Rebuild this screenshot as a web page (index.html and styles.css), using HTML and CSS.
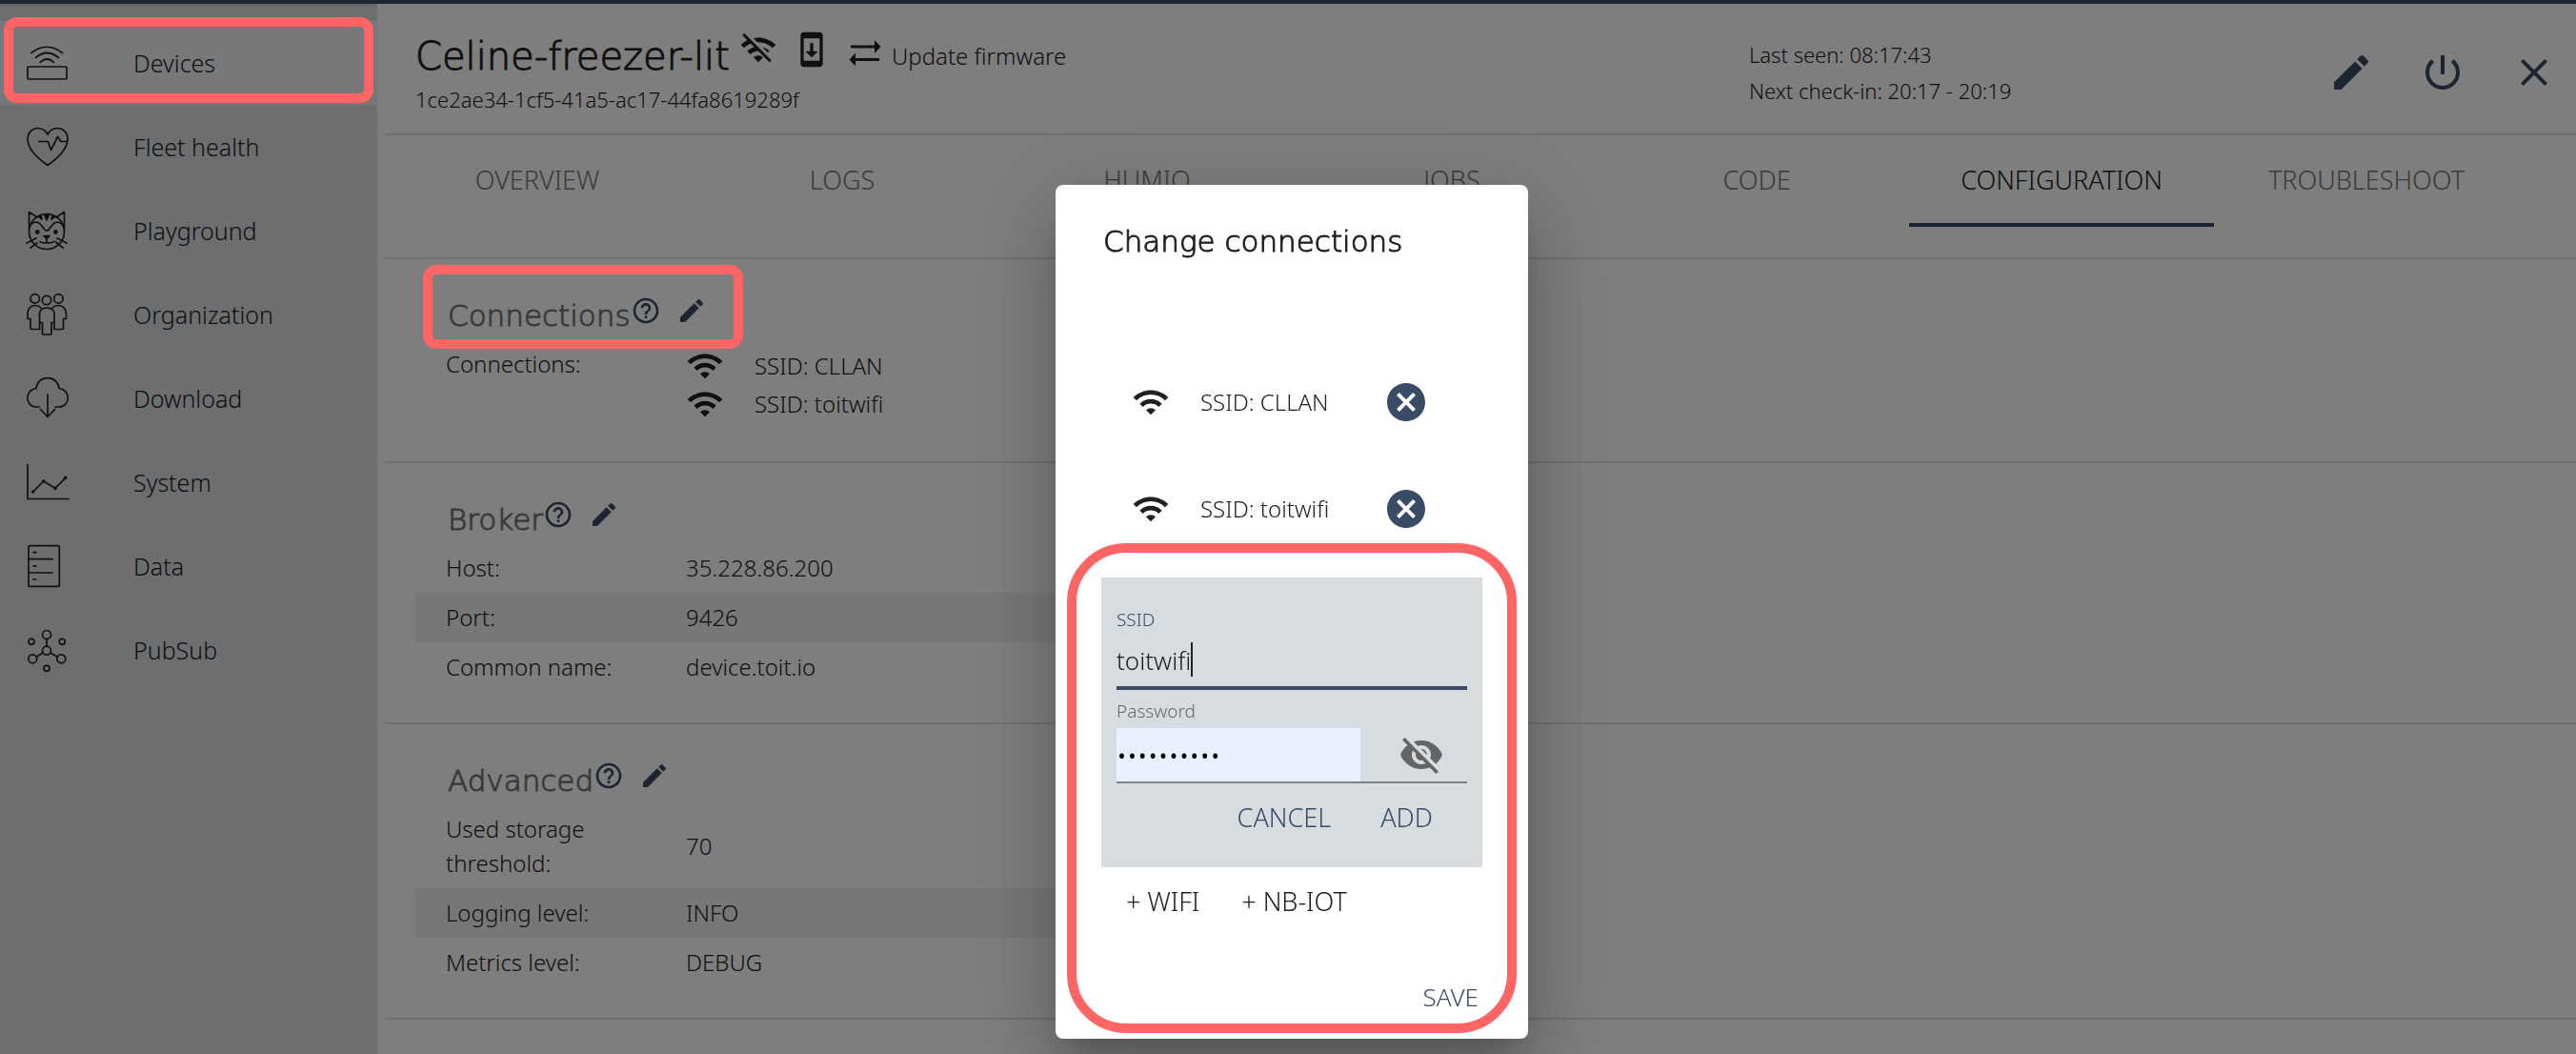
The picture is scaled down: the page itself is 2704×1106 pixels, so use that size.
FILE: index.html
```html
<!DOCTYPE html>
<html lang="en">
<head>
<meta charset="utf-8">
<title>Celine-freezer-lit – Configuration</title>
<link rel="stylesheet" href="styles.css">
</head>
<body>
<svg class="sprite" aria-hidden="true">
  <symbol id="wifi" viewBox="0 0 24 24"><path d="M1 9l2 2c4.97-4.97 13.03-4.97 18 0l2-2C16.93 2.93 7.08 2.93 1 9zm8 8l3 3 3-3c-1.65-1.66-4.34-1.66-6 0zm-4-4l2 2c2.76-2.76 7.24-2.76 10 0l2-2C15.14 9.14 8.87 9.14 5 13z"/></symbol>
  <symbol id="edit" viewBox="0 0 24 24"><path d="M3 17.25V21h3.75L17.81 9.94l-3.75-3.75L3 17.25zM20.71 7.04c.39-.39.39-1.02 0-1.41l-2.34-2.34c-.39-.39-1.02-.39-1.41 0l-1.83 1.83 3.75 3.75 1.83-1.83z"/></symbol>
  <symbol id="help" viewBox="0 0 24 24"><path d="M11 18h2v-2h-2v2zm1-16C6.48 2 2 6.48 2 12s4.48 10 10 10 10-4.48 10-10S17.52 2 12 2zm0 18c-4.41 0-8-3.59-8-8s3.59-8 8-8 8 3.59 8 8-3.59 8-8 8zm0-14c-2.21 0-4 1.79-4 4h2c0-1.1.9-2 2-2s2 .9 2 2c0 2-3 1.75-3 5h2c0-2.25 3-2.5 3-5 0-2.21-1.79-4-4-4z"/></symbol>
  <symbol id="cancel" viewBox="0 0 24 24"><path d="M12 2C6.47 2 2 6.47 2 12s4.47 10 10 10 10-4.47 10-10S17.53 2 12 2zm5 13.59L15.59 17 12 13.41 8.41 17 7 15.59 10.59 12 7 8.41 8.41 7 12 10.59 15.59 7 17 8.41 13.41 12 17 15.59z"/></symbol>
</svg>

<div class="app">
  <div class="topbar"></div>
  <div class="body">
    <nav class="sidebar">
      <a class="nav-item nav-item-active marked" href="#devices">
        <svg class="nav-icon" viewBox="0 0 48 48"><rect x="3" y="28" width="41" height="13" rx="1"/><path d="M7 13.5Q23 1 39.5 13.5M11.5 18.5Q23.3 8.5 35.5 18.5M16 23.5Q23.3 16.5 30.5 23.5"/></svg>
        Devices
      </a>
      <a class="nav-item" href="#health">
        <svg class="nav-icon" viewBox="0 0 48 48"><path d="M24 43.5C12 35 3 25 3 16C3 9 8 4.5 13.5 4.5C18 4.5 22 7 24 11C26 7 30 4.5 34.5 4.5C40 4.5 45 9 45 16C45 25 36 35 24 43.5ZM14.5 18.5H24.5L27.5 27.5L34.5 13.5L38 18.5H44.5"/></svg>
        Fleet health
      </a>
      <a class="nav-item" href="#playground">
        <svg class="nav-icon" viewBox="0 0 48 48"><circle cx="23" cy="25" r="18.5"/><path d="M4.5 22V4.5L13 10M41.5 22V4.5L33 10M5 20C8 14 14 14 17 18L21 23C22.5 24.5 24 24.5 25 23L29 18C32 14 38 14 41 20M23 31V36.5M16 35.5C17 37 19 36.8 23 36.8S29 37 30.5 35.5M2 37L12 32M6 42L13 37M44 37L34 32M40 42L32.5 36"/><path class="solid" d="M20.5 7H25.5L23 13ZM14 9L17 8L18 12ZM32 9L29 8L28 12ZM20 29.5H26L23 32.5Z"/><circle class="solid" cx="13.3" cy="25.5" r="1.6"/><circle class="solid" cx="32.4" cy="25.5" r="1.6"/></svg>
        Playground
      </a>
      <a class="nav-item" href="#organization">
        <svg class="nav-icon" viewBox="0 0 48 48"><circle cx="10.7" cy="7.4" r="4.7"/><circle cx="23" cy="9" r="4.7"/><circle cx="35.4" cy="7.4" r="4.7"/><path d="M17 17C15 15 13 14.5 11 14.5C6 14.5 3 18 3 23V28.5H6V38.5Q6 39.5 7 39.5H15.5V32M29 17C31 15 33 14.5 35 14.5C40 14.5 43.5 18 43.5 23V28.5H40.5V38.5Q40.5 39.5 39.5 39.5H31V32M15.5 32.5V24C15.5 19 18.5 17 23 17S31 19 31 24V32.5H28V44Q28 45 27 45H19.5Q18.5 45 18.5 44V32.5Z"/></svg>
        Organization
      </a>
      <a class="nav-item" href="#download">
        <svg class="nav-icon" viewBox="0 0 48 48"><path d="M15.5 33H12C6.5 33 2.8 28.5 2.8 23.5C2.8 18 7 14 12 13.5C12.5 7 17.5 2.7 24 2.7S35.5 7 36 13.5C41 14 45.3 18 45.3 23.5C45.3 28.5 41.5 33 36 33H32M24 20V43.5M16.5 35.5L24 43.5L31.5 35.5"/></svg>
        Download
      </a>
      <a class="nav-item" href="#system">
        <svg class="nav-icon" viewBox="0 0 48 48"><path d="M3 5.5V41.5H46M8.7 34L19.7 23L32 30.3L42.7 19.3"/><circle class="solid" cx="8.7" cy="34" r="1"/><circle class="solid" cx="19.7" cy="23" r="1"/><circle class="solid" cx="32" cy="30.3" r="1"/><circle class="solid" cx="42.7" cy="19.3" r="1"/></svg>
        System
      </a>
      <a class="nav-item" href="#data">
        <svg class="nav-icon" viewBox="0 0 48 48"><rect x="4" y="2.7" width="32.3" height="42.6" rx="1"/><path d="M4 16.7H29M4 31H29M9 9.7H12M9 24H12M9 38H12"/></svg>
        Data
      </a>
      <a class="nav-item" href="#pubsub">
        <svg class="nav-icon" viewBox="0 0 48 48"><circle cx="23" cy="8" r="4.5"/><circle cx="23" cy="24.7" r="4.5"/><circle cx="8.3" cy="33.3" r="4.5"/><circle cx="38.3" cy="33.3" r="4.5"/><circle cx="7" cy="15.3" r="3"/><circle cx="39.3" cy="15.3" r="3"/><circle cx="23" cy="43.3" r="3"/><path d="M23 12.5V20M19 27L12.5 31M27 27L34 31"/></svg>
        PubSub
      </a>
    </nav>

    <main class="main">
      <header class="device-header">
        <div class="device-name">
          <div class="title-row">
            <h1>Celine-freezer-lit</h1>
            <svg class="icon-40" viewBox="0 0 24 24"><path d="M22.99 9C19.15 5.16 13.8 3.76 8.84 4.78l2.52 2.52c3.47-.17 6.99 1.05 9.63 3.7l2-2zm-4 4c-1.29-1.29-2.84-2.13-4.49-2.56l3.53 3.53.96-.97zM2 3.05L5.07 6.1C3.6 6.82 2.22 7.78 1 9l1.99 2c1.24-1.24 2.67-2.16 4.2-2.77l2.24 2.24C7.81 10.89 6.27 11.73 5 13v.01L6.99 15c1.36-1.36 3.14-2.04 4.92-2.06L18.98 20l1.27-1.26L3.29 1.79 2 3.05zM9 17l3 3 3-3c-1.65-1.66-4.34-1.66-6 0z"/></svg>
            <svg class="icon-40 phone" viewBox="0 0 24 24"><path d="M17 1.01L7 1c-1.1 0-2 .9-2 2v18c0 1.1.9 2 2 2h10c1.1 0 2-.9 2-2V3c0-1.1-.9-1.99-2-1.99zM17 19H7V5h10v14zm-1-6h-3V8h-2v5H8l4 4 4-4z"/></svg>
            <a class="firmware" href="#firmware">
              <svg class="swap" viewBox="0 0 36 28"><path d="M3 5.5H28V0L34.5 7L28 14V8.5H3ZM33 19H8V13.5L1.5 20.5L8 27.5V22H33Z"/></svg>
              Update firmware
            </a>
          </div>
          <div class="uuid">1ce2ae34-1cf5-41a5-ac17-44fa8619289f</div>
        </div>
        <div class="device-times">
          <div>Last seen: 08:17:43</div>
          <div>Next check-in: 20:17 - 20:19</div>
        </div>
        <div class="device-actions">
          <button class="icon-button" aria-label="Edit"><svg class="icon-48"><use href="#edit"/></svg></button>
          <button class="icon-button" aria-label="Reboot"><svg class="icon-48" viewBox="0 0 24 24"><path d="M13 3h-2v10h2V3zm4.83 2.17l-1.42 1.42C17.99 7.86 19 9.81 19 12c0 3.87-3.13 7-7 7s-7-3.13-7-7c0-2.19 1.01-4.14 2.58-5.42L6.17 5.17C4.23 6.82 3 9.26 3 12c0 4.97 4.03 9 9 9s9-4.03 9-9c0-2.74-1.23-5.18-3.17-6.83z"/></svg></button>
          <button class="icon-button" aria-label="Close"><svg class="icon-48" viewBox="0 0 24 24"><path d="M19 6.41L17.59 5 12 10.59 6.41 5 5 6.41 10.59 12 5 17.59 6.41 19 12 13.41 17.59 19 19 17.59 13.41 12z"/></svg></button>
        </div>
      </header>

      <div class="tabs" role="tablist">
        <button class="tab" role="tab">OVERVIEW</button>
        <button class="tab" role="tab">LOGS</button>
        <button class="tab" role="tab">HUMIO</button>
        <button class="tab" role="tab">JOBS</button>
        <button class="tab" role="tab">CODE</button>
        <button class="tab tab-active" role="tab" aria-selected="true">CONFIGURATION</button>
        <button class="tab" role="tab">TROUBLESHOOT</button>
      </div>

      <section class="section">
        <div class="section-head marked">
          <h2>Connections</h2>
          <button class="icon-button" aria-label="About connections"><svg class="icon-32"><use href="#help"/></svg></button>
          <button class="icon-button edit" aria-label="Edit connections"><svg class="icon-32"><use href="#edit"/></svg></button>
        </div>
        <table class="details">
          <tr class="top">
            <th scope="row">Connections:</th>
            <td>
              <ul class="networks">
                <li><svg class="icon-40"><use href="#wifi"/></svg>SSID: CLLAN</li>
                <li><svg class="icon-40"><use href="#wifi"/></svg>SSID: toitwifi</li>
              </ul>
            </td>
          </tr>
        </table>
      </section>

      <section class="section">
        <div class="section-head">
          <h2>Broker</h2>
          <button class="icon-button" aria-label="About the broker"><svg class="icon-32"><use href="#help"/></svg></button>
          <button class="icon-button edit" aria-label="Edit broker"><svg class="icon-32"><use href="#edit"/></svg></button>
        </div>
        <table class="details">
          <tr><th scope="row">Host:</th><td>35.228.86.200</td></tr>
          <tr><th scope="row">Port:</th><td>9426</td></tr>
          <tr><th scope="row">Common name:</th><td>device.toit.io</td></tr>
        </table>
      </section>

      <section class="section">
        <div class="section-head">
          <h2>Advanced</h2>
          <button class="icon-button" aria-label="About advanced settings"><svg class="icon-32"><use href="#help"/></svg></button>
          <button class="icon-button edit" aria-label="Edit advanced settings"><svg class="icon-32"><use href="#edit"/></svg></button>
        </div>
        <table class="details">
          <tr><th scope="row">Used storage threshold:</th><td>70</td></tr>
          <tr><th scope="row">Logging level:</th><td>INFO</td></tr>
          <tr><th scope="row">Metrics level:</th><td>DEBUG</td></tr>
        </table>
      </section>
    </main>
  </div>
</div>

<div class="backdrop">
  <div class="dialog" role="dialog" aria-labelledby="dialog-title">
    <h2 class="dialog-title" id="dialog-title">Change connections</h2>
    <ul class="dialog-list">
      <li>
        <svg class="icon-40"><use href="#wifi"/></svg>
        <span class="ssid">SSID: CLLAN</span>
        <button class="icon-button" aria-label="Remove CLLAN"><svg class="icon-48"><use href="#cancel"/></svg></button>
      </li>
      <li>
        <svg class="icon-40"><use href="#wifi"/></svg>
        <span class="ssid">SSID: toitwifi</span>
        <button class="icon-button" aria-label="Remove toitwifi"><svg class="icon-48"><use href="#cancel"/></svg></button>
      </li>
    </ul>
    <form class="wifi-form">
      <label class="label label-focused" for="ssid">SSID</label>
      <div class="field field-focused">
        <input id="ssid" type="text" value="toitwifi">
        <span class="caret"></span>
      </div>
      <label class="label label-password" for="password">Password</label>
      <div class="field field-password">
        <input id="password" type="password" value="toitpasswd">
        <button class="icon-button reveal" type="button" aria-label="Show password"><svg class="icon-48" viewBox="0 0 24 24"><path d="M12 7c2.76 0 5 2.24 5 5 0 .65-.13 1.26-.36 1.83l2.92 2.92c1.51-1.26 2.7-2.89 3.43-4.75-1.73-4.39-6-7.5-11-7.5-1.4 0-2.74.25-3.98.7l2.16 2.16C10.74 7.13 11.35 7 12 7zM2 4.27l2.28 2.28.46.46C3.08 8.3 1.78 10.02 1 12c1.73 4.39 6 7.5 11 7.5 1.55 0 3.03-.3 4.38-.84l.42.42L19.73 22 21 20.73 3.27 3 2 4.27zM7.53 9.8l1.55 1.55c-.05.21-.08.43-.08.65 0 1.66 1.34 3 3 3 .22 0 .44-.03.65-.08l1.55 1.55c-.67.33-1.41.53-2.2.53-2.76 0-5-2.24-5-5 0-.79.2-1.53.53-2.2zm4.31-.78l3.15 3.15.02-.16c0-1.66-1.34-3-3-3l-.17.01z"/></svg></button>
      </div>
      <div class="form-actions">
        <button class="text-button" type="button">CANCEL</button>
        <button class="text-button" type="button">ADD</button>
      </div>
    </form>
    <div class="add-actions">
      <button class="text-button">+ WIFI</button>
      <button class="text-button">+ NB-IOT</button>
    </div>
    <div class="dialog-actions">
      <button class="text-button">SAVE</button>
    </div>
  </div>
</div>
</body>
</html>
```
FILE: styles.css
```css
:root {
  --navy: #3a4b66;
  --ink: #212121;
  --muted: #757575;
  --line: #dfdfdf;
  --mark: #ff6565;
}

* { box-sizing: border-box; }

body {
  margin: 0;
  background: #fcfcfc;
  color: var(--ink);
  font-family: "Noto Sans", "Open Sans", sans-serif;
  font-size: 24px;
  font-weight: 300;
  line-height: 36px;
}

h1, h2, ul { margin: 0; padding: 0; }
ul { list-style: none; }
h1, h2 {
  font-family: "DejaVu Sans", sans-serif;
  font-weight: 200;
  -webkit-text-stroke: 1px currentColor;
}
a { color: inherit; text-decoration: none; }
button { margin: 0; border: 0; background: none; font: inherit; cursor: pointer; }
svg { display: block; flex: none; fill: currentColor; }

.sprite { position: absolute; width: 0; height: 0; }
.icon-32 { width: 32px; height: 32px; }
.icon-40 { width: 40px; height: 40px; }
.icon-48 { width: 48px; height: 48px; }
.icon-button { padding: 0; color: var(--navy); }

.app { display: flex; flex-direction: column; height: 100vh; overflow: hidden; }
.topbar { flex: none; height: 4px; background: var(--navy); }
.body { display: flex; flex: 1; }

/* Rounded frames that point out a control, drawn above the backdrop */
.marked { position: relative; }
.marked::after, .dialog::after {
  content: "";
  position: absolute;
  z-index: 20;
  border: 10px solid var(--mark);
  border-radius: 14px;
  pointer-events: none;
}

/* Sidebar */
.sidebar {
  flex: none;
  width: 396px;
  padding-top: 16px;
  border-top: 2px solid #c6c8cb;
  background: #dadce0;
}
.nav-item {
  display: flex;
  align-items: center;
  gap: 66px;
  height: 88px;
  padding-left: 26px;
  font-size: 25px;
}
.nav-item-active { background: #eef0f2; }
.nav-item.marked::after { inset: -4px 4px 2px; }
.nav-icon {
  width: 48px;
  height: 48px;
  fill: none;
  stroke: currentColor;
  stroke-width: 1.7;
  stroke-linejoin: round;
  stroke-linecap: round;
}
.nav-icon .solid { fill: currentColor; }

/* Device header */
.main { flex: 1; min-width: 0; padding-left: 8px; }
.device-header {
  display: grid;
  grid-template-columns: 1400px 1fr auto;
  height: 138px;
  padding: 0 20px 0 32px;
  border-bottom: 2px solid var(--line);
}
.title-row { display: flex; height: 72px; padding-top: 28px; }
h1 { width: 340px; font-size: 40px; line-height: 54px; white-space: nowrap; }
.phone { margin-left: 16px; }
.firmware { display: flex; margin-left: 18px; line-height: 54px; }
.swap { width: 36px; height: 28px; margin: 10px 10px 0 0; }
.uuid { padding-top: 10px; font-size: 22px; }
.device-times { padding-top: 34px; font-size: 22px; line-height: 38px; }
.device-actions { display: flex; align-items: flex-start; gap: 48px; padding-top: 48px; }

/* Tabs */
.tabs {
  display: grid;
  grid-template-columns: repeat(7, 1fr);
  height: 130px;
  padding: 0 60px 32px 0;
  border-bottom: 2px solid var(--line);
}
.tab {
  padding: 2px 0 0;
  border-bottom: 4px solid transparent;
  color: var(--muted);
  font-size: 27px;
}
.tab-active { border-color: var(--navy); color: var(--ink); }

/* Sections */
.section { padding: 34px 32px 32px; border-bottom: 2px solid var(--line); }
.section-head {
  display: flex;
  align-items: flex-start;
  width: max-content;
  height: 50px;
  margin-left: 34px;
}
.section-head.marked::after { inset: -28px -38px -10px -26px; }
.section-head h2 { color: var(--muted); font-size: 31px; line-height: 50px; }
.section-head .icon-button { margin-top: 4px; }
.section-head .edit { margin-left: 16px; }

.details { width: 1064px; max-width: 100%; border-collapse: collapse; }
.details tr:nth-child(even) { background: #efefef; }
.details th, .details td { padding: 8px 0; text-align: left; font-weight: 300; }
.details th { width: 284px; padding: 8px 70px 8px 32px; }
.details .top th { vertical-align: top; }
.networks li { display: flex; gap: 32px; line-height: 40px; }

/* Dialog */
.backdrop {
  position: fixed;
  inset: 0;
  z-index: 10;
  display: flex;
  align-items: flex-start;
  justify-content: center;
  padding: 194px 0 0 8px;
  background: rgba(0, 0, 0, 0.5);
}
.dialog {
  position: relative;
  width: 496px;
  padding: 38px 0 20px;
  border-radius: 8px;
  background: #fff;
  box-shadow: 0 22px 30px -14px rgba(0, 0, 0, 0.2), 0 48px 76px 6px rgba(0, 0, 0, 0.14), 0 18px 92px 16px rgba(0, 0, 0, 0.12);
}
.dialog::after { inset: 376px 12px 6px; border-radius: 62px; }
.dialog-title { padding: 0 50px; font-size: 31px; line-height: 42px; }
.dialog-list { padding-top: 92px; }
.dialog-list li { display: flex; align-items: center; height: 112px; padding: 0 104px 0 80px; }
.ssid { flex: 1; padding-left: 32px; }

.wifi-form { margin: 16px 48px 0; padding: 32px 16px 28px; background: #d7dce0; }
.label { display: block; color: #676a6d; font-size: 19px; line-height: 24px; }
.label-focused { color: var(--navy); }
.label-password { margin-top: 10px; }
.field { position: relative; display: flex; align-items: center; }
.field input {
  width: 100%;
  height: 58px;
  padding: 4px 0 0;
  border: 0;
  outline: 0;
  background: none;
  color: inherit;
  font: inherit;
  font-size: 26px;
}
.field-focused { border-bottom: 4px solid var(--navy); }
.caret { position: absolute; left: 78px; top: 12px; width: 2px; height: 36px; background: var(--ink); }
.field-password { margin-top: 6px; border-bottom: 2px solid #7f8488; }
.field-password input {
  width: 256px;
  height: 56px;
  padding: 0;
  background: #e8f0fe;
  color: #000;
  font-size: 29px;
}
.reveal { margin-left: 40px; color: #646464; }

.text-button { height: 48px; padding: 0 16px; color: var(--navy); font-size: 27px; white-space: nowrap; }
.form-actions { display: flex; justify-content: flex-end; gap: 20px; margin: 12px 20px 0 0; }
.add-actions { display: flex; gap: 12px; margin: 12px 0 0 58px; }
.add-actions .text-button { color: var(--ink); }
.dialog-actions { display: flex; justify-content: flex-end; margin: 52px 36px 0 0; }
.dialog-actions .text-button { font-size: 26px; }
```
